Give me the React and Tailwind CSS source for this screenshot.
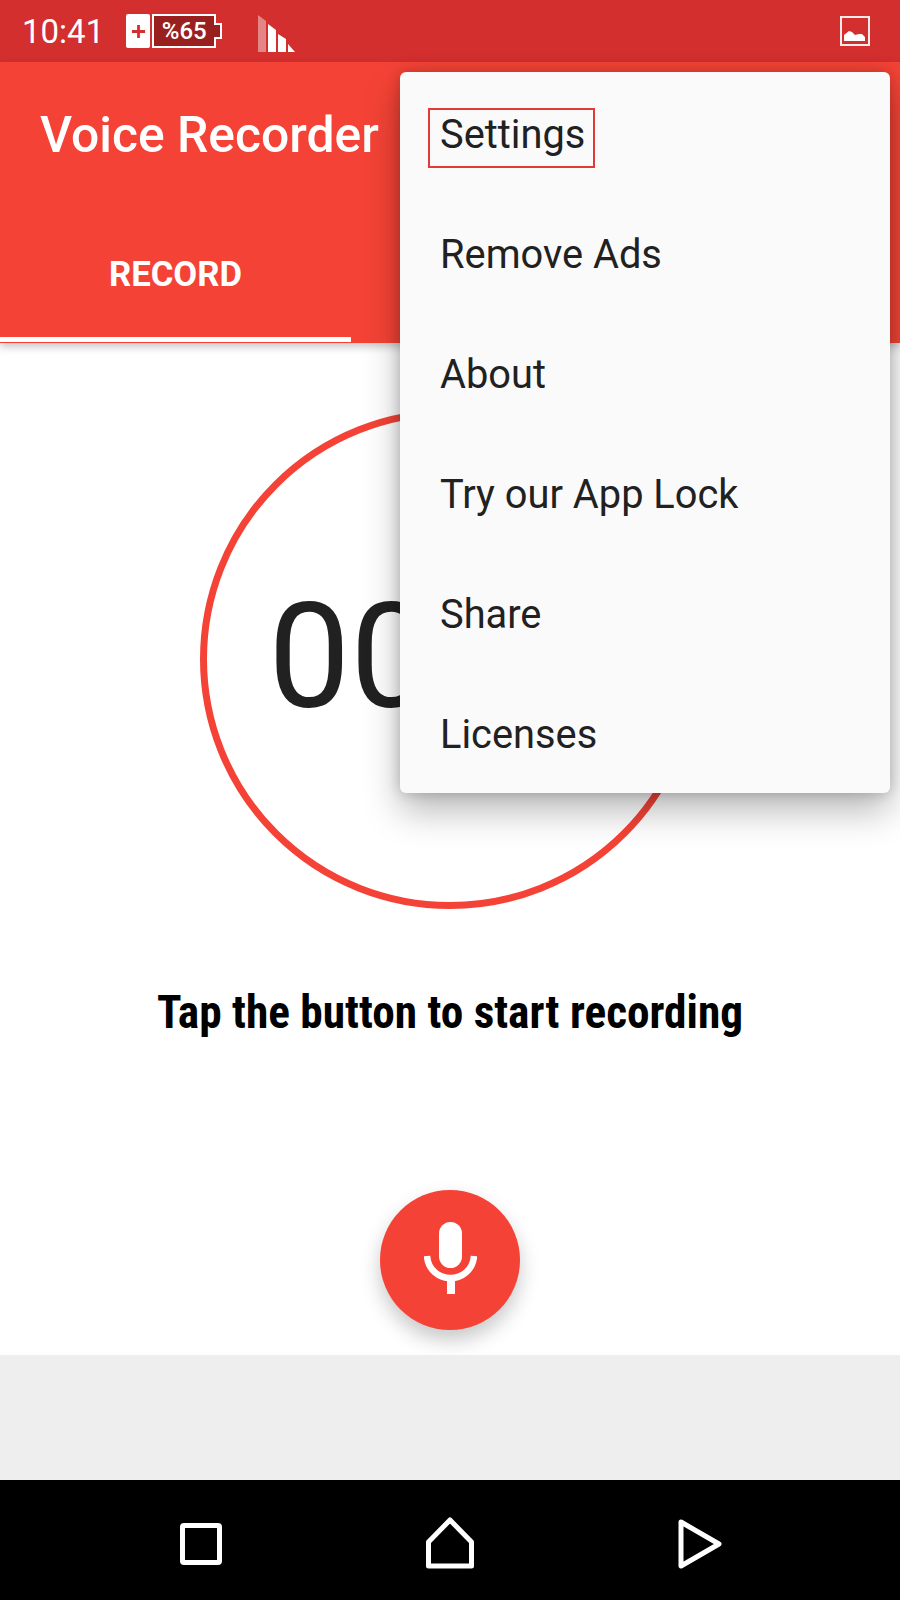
function Signal() {
  return (
    <svg width="40" height="40" viewBox="0 0 40 40" className="block">
      <path d="M0 0L8 6V37H0Z" fill="#fff" fillOpacity="0.42" />
      <path d="M10 9L18 15V37H10Z" fill="#fff" />
      <path d="M20 19L28 24V37H20Z" fill="#fff" />
      <path d="M30 29L37 37H30Z" fill="#fff" />
    </svg>
  );
}

function Battery() {
  return (
    <div className="flex items-center gap-[2px]">
      <div className="w-[24px] h-[34px] bg-white rounded-[2px] flex items-center justify-center">
        <svg width="15" height="15" viewBox="0 0 16 16">
          <path d="M6.500 1h3v5.500H15v3H9.500V15h-3V9.500H1v-3h5.500Z" fill="#D32F2F" />
        </svg>
      </div>
      <div className="relative w-[64px] h-[34px] border-2 border-white bg-[#9A1F1F] flex items-center justify-center text-white text-[24px] font-medium leading-none">
        %65
        <span className="absolute right-[-8px] top-[7px] w-[8px] h-[16px] bg-[#9A1F1F] border-2 border-l-0 border-white" />
      </div>
    </div>
  );
}

function ImageIcon() {
  return (
    <svg width="30" height="30" viewBox="0 0 30 30" className="block">
      <rect x="1" y="1" width="28" height="28" fill="none" stroke="#fff" strokeOpacity="0.9" strokeWidth="2" />
      <path d="M4 25V19L9 15L12 16L15 19L19 18L22 18L25 21V25Z" fill="#fff" />
    </svg>
  );
}

export default function App() {
  const items = ["Settings", "Remove Ads", "About", "Try our App Lock", "Share", "Licenses"];
  return (
    <div className="relative w-[900px] h-[1600px] overflow-hidden bg-white flex flex-col font-['Roboto',sans-serif]">
      <div className="h-[62px] bg-[#D32F2F] flex items-center pl-[22px] pr-[30px] shrink-0">
        <span className="text-white text-[33px] font-normal leading-none">10:41</span>
        <div className="ml-[22px]"><Battery /></div>
        <div className="ml-[42px] mt-[7px]"><Signal /></div>
        <div className="ml-auto"><ImageIcon /></div>
      </div>

      <div className="relative z-10 h-[281px] bg-[#F44336] shrink-0 shadow-[0_4px_8px_rgba(0,0,0,0.22)]">
        <div className="pl-[40px] pt-[43px] text-white text-[49.800px] font-medium leading-[60px] whitespace-nowrap">Voice Recorder</div>
        <div className="absolute left-0 bottom-0 w-[351px] h-[118px] flex items-center justify-center border-b-[5px] border-white mb-px pb-[12px] text-white text-[34.700px] font-bold">RECORD</div>
      </div>

      <div className="flex-1 flex flex-col items-center">
        <div className="mt-[66px] w-[500px] h-[500px] rounded-full border-[7px] border-[#F44336] flex items-center justify-center pb-[2px]">
          <span className="text-[#212121] text-[146px] leading-none whitespace-nowrap">00:00</span>
        </div>
        <div className="mt-[74px] text-black text-[45.300px] font-bold leading-[60px] whitespace-nowrap [font-stretch:75%]">Tap the button to start recording</div>
        <div className="mt-[147px] w-[140px] h-[140px] rounded-full bg-[#F44336] flex items-center justify-center shadow-[0_10px_20px_rgba(0,0,0,0.22)]">
          <svg width="53" height="72" viewBox="0 0 53 72" className="mb-[4px]">
            <rect x="15" y="0" width="23" height="46" rx="11.500" fill="#fff" />
            <path d="M3 34C4 48 15 56 26.500 56C38 56 49 48 50 34" fill="none" stroke="#fff" strokeWidth="6.500" />
            <rect x="23" y="56" width="8" height="16" fill="#fff" />
          </svg>
        </div>
      </div>

      <div className="h-[125px] bg-[#EEEEEE] shrink-0" />
      <div className="h-[120px] bg-black shrink-0 flex items-center justify-between pt-[8px] pl-[180px] pr-[178px]">
        <svg width="42" height="42" viewBox="0 0 42 42"><rect x="2.500" y="2.500" width="37" height="37" rx="1.500" fill="none" stroke="#fff" strokeWidth="5" /></svg>
        <svg width="52" height="52" viewBox="0 0 52 52" className="mb-[3px]"><path d="M4.500 25L26 3L47.500 25V49H4.500Z" fill="none" stroke="#fff" strokeWidth="5" strokeLinejoin="round" /></svg>
        <svg width="44" height="50" viewBox="0 0 44 50"><path d="M3 3L41 25L3 47Z" fill="none" stroke="#fff" strokeWidth="5" strokeLinejoin="round" /></svg>
      </div>

      <div className="absolute z-20 left-[400px] top-[72px] w-[490px] h-[721px] bg-[#FAFAFA] rounded-[6px] shadow-[0_18px_36px_rgba(0,0,0,0.28),0_0_14px_rgba(0,0,0,0.2)] flex flex-col pt-[3px]">
        {items.map((t, i) => (
          <div key={t} className="h-[120px] shrink-0 flex items-center pl-[40px] text-[#212121] text-[39.800px] leading-none whitespace-nowrap">
            {i === 0 ? (
              <span className="relative">
                {t}
                <span className="absolute left-[-12px] right-[-10px] top-[-7px] bottom-[-13px] border-2 border-[#E53935]" />
              </span>
            ) : t}
          </div>
        ))}
      </div>
    </div>
  );
}
